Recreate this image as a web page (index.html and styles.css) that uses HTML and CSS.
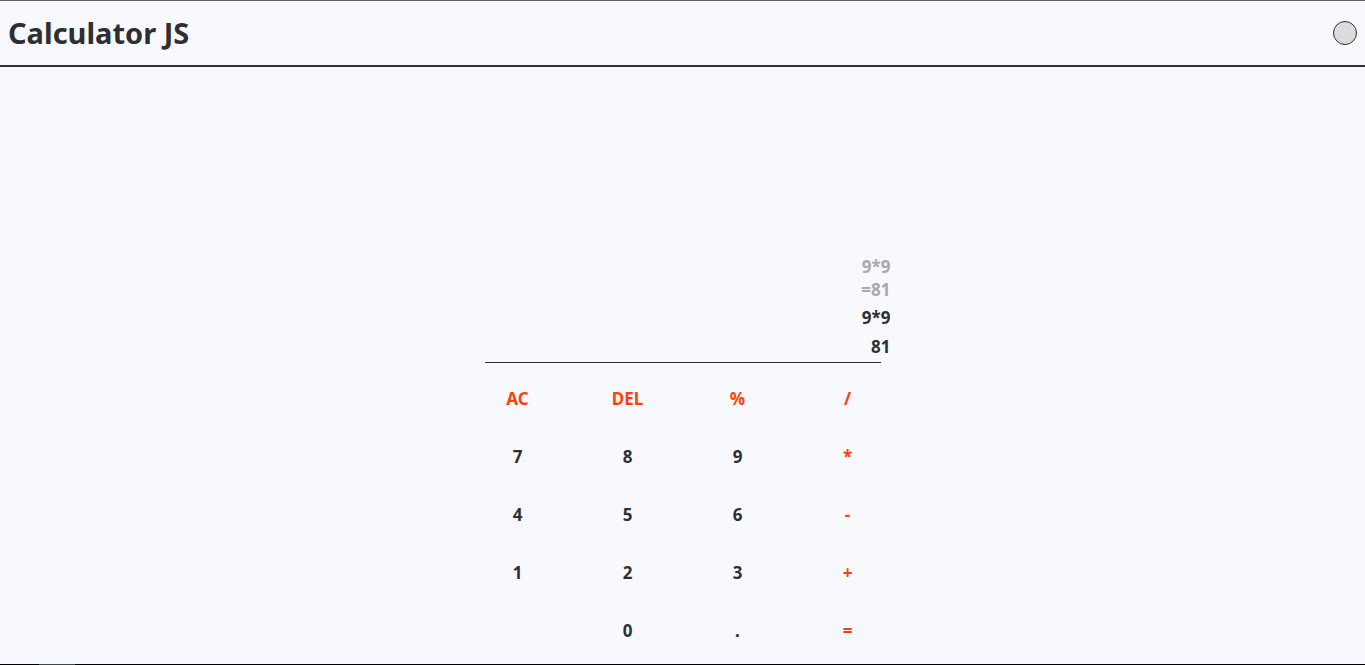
FILE: index.html
```html
<!DOCTYPE html>
<html lang="en">
<head>
  <meta charset="utf-8">
  <meta name="viewport" content="width=device-width, initial-scale=1">
  <title>Calculator JS</title>
  <link rel="stylesheet" href="styles.css">
</head>
<body>
  <header class="header">
    <h1 class="title">Calculator JS</h1>
    <button class="theme-toggle" type="button" aria-label="Switch theme"></button>
  </header>
  <main class="calculator">
    <section class="display" aria-label="Display">
      <div class="history">
        <div>9*9</div>
        <div>=81</div>
      </div>
      <div class="expression">9*9</div>
      <output class="result">81</output>
    </section>
    <hr class="divider">
    <section class="keypad" aria-label="Keypad">
      <button class="key operator" type="button">AC</button>
      <button class="key operator" type="button">DEL</button>
      <button class="key operator" type="button">%</button>
      <button class="key operator" type="button">/</button>
      <button class="key" type="button">7</button>
      <button class="key" type="button">8</button>
      <button class="key" type="button">9</button>
      <button class="key operator" type="button">*</button>
      <button class="key" type="button">4</button>
      <button class="key" type="button">5</button>
      <button class="key" type="button">6</button>
      <button class="key operator" type="button">-</button>
      <button class="key" type="button">1</button>
      <button class="key" type="button">2</button>
      <button class="key" type="button">3</button>
      <button class="key operator" type="button">+</button>
      <button class="key zero" type="button">0</button>
      <button class="key" type="button">.</button>
      <button class="key operator" type="button">=</button>
    </section>
  </main>
  <footer class="baseline"></footer>
</body>
</html>
```

FILE: styles.css
```css
* {
  box-sizing: border-box;
}

body {
  display: flex;
  flex-direction: column;
  min-height: 100vh;
  margin: 0;
  border-top: 1px solid #66636a;
  background: #f8f9ff;
  color: #2f2f31;
  font-family: "Segoe UI", "Noto Sans", "Open Sans", sans-serif;
  font-size: 17px;
  font-weight: 700;
}

.header {
  display: flex;
  align-items: center;
  justify-content: space-between;
  padding: 12px 8px;
  border-bottom: 2px solid #2f2f31;
}

.title {
  margin: 0;
  font-size: 29px;
  font-weight: 700;
  line-height: 40px;
}

.theme-toggle {
  width: 24px;
  height: 24px;
  padding: 0;
  border: 1px solid #2f2f31;
  border-radius: 50%;
  background: #dcdcdc;
}

.calculator {
  display: flex;
  flex: 1;
  flex-direction: column;
  justify-content: flex-end;
  width: 100%;
  max-width: 440px;
  margin: 0 auto;
  padding-bottom: 5px;
}

.display {
  display: flex;
  flex-direction: column;
  padding: 0 12px;
  text-align: right;
}

.history {
  color: #a9a9a9;
  line-height: 23px;
}

.expression {
  padding-top: 2px;
  line-height: 29px;
}

.result {
  line-height: 29px;
}

.divider {
  width: 90%;
  height: 1px;
  margin: 1px auto 6px;
  border: 0;
  background: #2f2f31;
}

.keypad {
  display: grid;
  grid-template-columns: repeat(4, 1fr);
  grid-auto-rows: 58px;
}

.key {
  padding: 0;
  border: 0;
  background: none;
  color: inherit;
  font: inherit;
}

.operator {
  color: #ff4109;
}

.zero {
  grid-column: 2;
}

.baseline {
  height: 1px;
  background: linear-gradient(to right, #000 39px, #444 39px, #444 75px, #000 75px);
}
```
